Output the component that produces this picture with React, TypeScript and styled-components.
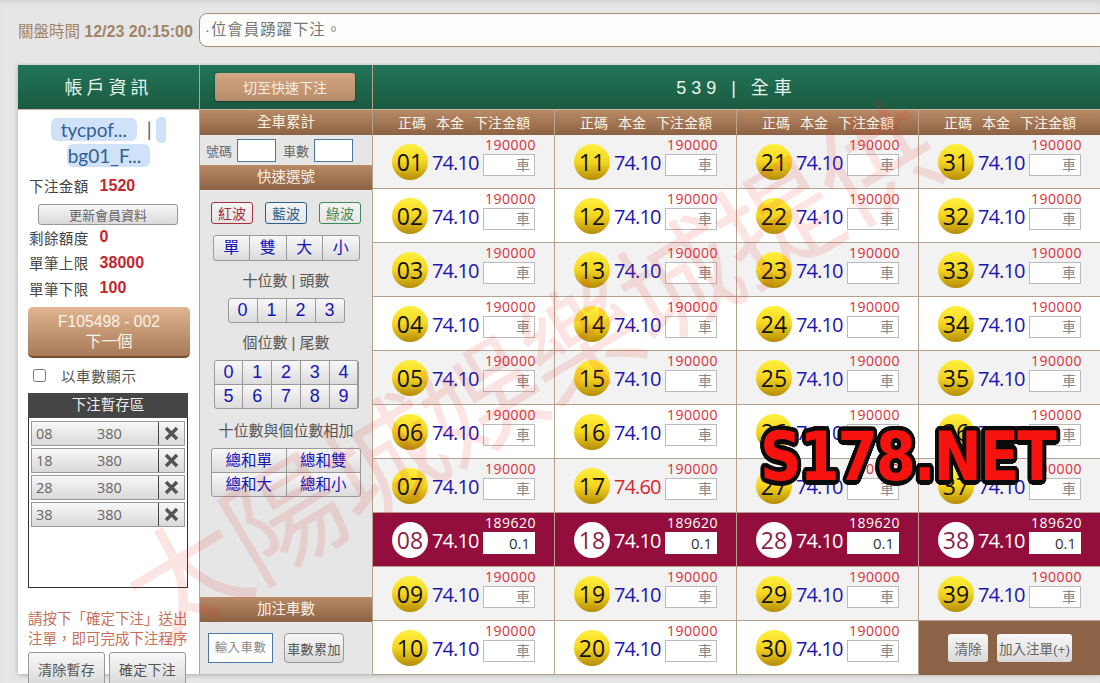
import React from "react";
import styled, { createGlobalStyle, css } from "styled-components";

const Global = createGlobalStyle`
  html, body { margin: 0; padding: 0; height: 683px; overflow: hidden; background: #e6e6e6; }
  * { box-sizing: border-box; }
  body { font-family: "Liberation Sans", "Noto Sans CJK TC", sans-serif; }
`;

const cjk = `"Liberation Sans", "Noto Sans CJK TC", sans-serif`;
const round = `"Open Sans", "Noto Sans CJK TC", sans-serif`;
const green = css`background: linear-gradient(#22745a, #1a5a40);`;
const brown = css`background: linear-gradient(#b88a66, #8d6244);`;
const silver = css`background: linear-gradient(#f8f8f8, #d9d9d9);`;

const Page = styled.div`
  position: relative;
  width: 1100px;
  height: 683px;
  overflow: hidden;
  padding: 13px 0 0 18px;
  box-shadow: inset 0 6px 6px -4px #cfcfcf;
`;
const TopBar = styled.div`
  display: flex;
  align-items: center;
  height: 34px;
  gap: 6px;
  width: 1120px;
`;
const CloseLabel = styled.div`
  font-size: 15.5px;
  color: #a08467;
  white-space: nowrap;
  b { font-size: 16px; }
`;
const Notice = styled.div`
  flex: 1;
  height: 34px;
  border: 1px solid #a98d72;
  border-radius: 8px;
  background: #fdfdfb;
  font-size: 15.4px;
  letter-spacing: 1px;
  line-height: 32px;
  padding-left: 5px;
  color: #777;
`;
const Panel = styled.div`
  display: flex;
  margin-top: 18px;
  width: 1082px;
  height: 609px;
  box-shadow: 0 1px 5px #aaa;
  background: #fff;
`;
const LeftCol = styled.div`
  width: 181px;
  flex: none;
  background: #fff;
`;
const MidCol = styled.div`
  width: 174px;
  flex: none;
  display: flex;
  flex-direction: column;
  background: #e6e6e6;
  border-left: 1px solid #b5a18d;
  border-right: 1px solid #b5a18d;
`;
const RightCol = styled.div`
  flex: 1;
  min-width: 0;
`;
const GreenHead = styled.div<{ $sp?: number }>`
  ${green}
  height: 45px;
  display: flex;
  align-items: center;
  justify-content: center;
  padding-bottom: 3px;
  color: #e9f5ea;
  font-size: 18px;
  letter-spacing: ${(p) => p.$sp ?? 4}px;
  border-bottom: 1px solid #c9b8a6;
`;
const SwitchHead = styled(GreenHead)`
  padding: 0 2px 0 0;
`;
const SwitchBtn = styled.button`
  width: 140px;
  height: 28px;
  border: 0;
  border-radius: 3px;
  background: linear-gradient(#d4a683, #b78a69);
  box-shadow: 0 1px 2px #0e3b28;
  color: #fbeee0;
  font: 14px ${cjk};
`;
const Users = styled.div`
  text-align: center;
  font: 19px/26px Lato, "Noto Sans CJK TC", sans-serif;
  color: #35608f;
  padding: 7px 8px 0;
  height: 63px;
`;
const UserTag = styled.span<{ $wrapped?: boolean }>`
  background: #cfe2f8;
  border-radius: 6px;
  padding: ${(p) => (p.$wrapped ? "0 9px 0 1px" : "0 10px")};
`;
const UserStub = styled.span`
  display: inline-block;
  vertical-align: top;
  width: 10px;
  height: 26px;
  background: #cfe2f8;
  border-radius: 5px 3px 3px 5px;
`;
const InfoRow = styled.div`
  display: flex;
  align-items: center;
  height: 25.5px;
  padding-left: 11px;
  font-size: 14.5px;
  color: #444;
  letter-spacing: 0.4px;
  b { color: #c4262e; font-size: 16px; margin-left: 11px; letter-spacing: 0; }
`;
const UpdateBtn = styled.button`
  ${silver}
  display: block;
  width: 140px;
  height: 21px;
  margin: 5px 0 0 20px;
  border: 1px solid #999;
  border-radius: 3px;
  color: #666;
  font: 13px ${cjk};
  padding: 0;
`;
const NextBtn = styled.button`
  display: block;
  width: 162px;
  height: 51px;
  margin: 6px 0 0 10px;
  border: 0;
  border-bottom: 2px solid #7a4d2a;
  border-radius: 5px;
  background: linear-gradient(#e0b592, #a87a57);
  color: #fdf3e8;
  font: 15.7px/20px ${cjk};
`;
const CheckRow = styled.label`
  display: flex;
  align-items: center;
  height: 35px;
  padding-left: 15px;
  font-size: 14.5px;
  color: #555;
  letter-spacing: 0.6px;
  input { width: 13px; height: 13px; margin: 0 15px 0 0; }
`;
const Stash = styled.div`
  width: 160px;
  height: 195px;
  margin-left: 10px;
  border: 1px solid #333;
  border-top: 0;
`;
const StashHead = styled.div`
  height: 25px;
  background: #454545;
  margin: 0 -1px 3px;
  color: #f1f1f1;
  text-align: center;
  font-size: 14.5px;
  line-height: 25px;
`;
const StashRow = styled.div`
  ${silver}
  display: flex;
  align-items: center;
  height: 25px;
  margin: 0 2px 2px;
  border: 1px solid #999;
  color: #666;
  font: 14.5px ${round};
  span { width: 65px; padding-left: 4px; }
  span + span { width: 60px; padding-left: 0; }
`;
const StashX = styled.div`
  margin-left: auto;
  width: 26px;
  height: 100%;
  border-left: 1px solid #444;
  display: flex;
  align-items: center;
  justify-content: center;
  svg { display: block; }
`;
const Hint = styled.div`
  margin: 21px 0 0 10px;
  font-size: 14.5px;
  line-height: 20px;
  color: #c4705a;
  white-space: nowrap;
`;
const StashBtns = styled.div`
  display: flex;
  gap: 4px;
  margin: 3px 0 0 10px;
`;
const StashBtn = styled.button`
  ${silver}
  width: 77px;
  height: 34px;
  flex: none;
  border: 1px solid #999;
  border-radius: 3px;
  color: #555;
  font: 14px ${cjk};
  letter-spacing: 0.3px;
  padding: 0;
`;
const SectionHead = styled.div`
  ${brown}
  height: 25px;
  flex: none;
  color: #fff2e4;
  text-align: center;
  font-size: 14.5px;
  line-height: 25px;
`;
const TotalRow = styled.div`
  display: flex;
  align-items: center;
  height: 30px;
  flex: none;
  padding-left: 6px;
  font-size: 13px;
  color: #666;
  span { margin-right: 5px; white-space: nowrap; }
`;
const SmallInput = styled.div`
  width: 39px;
  height: 23px;
  background: #fff;
  border: 1px solid #4a76a0;
  margin-right: 7px;
`;
const WaveRow = styled.div`
  display: flex;
  justify-content: space-between;
  padding: 12px 11px 11px 11px;
  flex: none;
`;
const Wave = styled.button<{ $c: string }>`
  width: 42px;
  height: 22px;
  padding: 0;
  border: 1px solid ${(p) => p.$c};
  border-radius: 3px;
  background: linear-gradient(#f4f4f4, #e6e6e6);
  color: ${(p) => p.$c};
  font: 14px ${cjk};
`;
const KeyGrid = styled.div<{ $w: number; $cols: number; $h: number; $fs: number }>`
  display: grid;
  grid-template-columns: repeat(${(p) => p.$cols}, 1fr);
  grid-auto-rows: ${(p) => p.$h}px;
  gap: 1px;
  width: ${(p) => p.$w}px;
  margin: 0 auto;
  background: #9a9a9a;
  border: 1px solid #9a9a9a;
  border-radius: 3px;
  overflow: hidden;
  flex: none;
  font-size: ${(p) => p.$fs}px;
  line-height: ${(p) => p.$h}px;
`;
const Key = styled.div`
  background: linear-gradient(#f8f8f8, #dcdcdc);
  color: #1414b8;
  text-align: center;
`;
const GroupTitle = styled.div<{ $top?: number }>`
  font-size: 15px;
  color: #555;
  text-align: center;
  line-height: 20px;
  margin: ${(p) => p.$top ?? 10}px 0 7px;
  flex: none;
`;
const AddRow = styled.div`
  margin: 11px 0;
  display: flex;
  padding-left: 8px;
  gap: 11px;
  flex: none;
`;
const AddInput = styled.div`
  width: 65px;
  height: 30px;
  border: 1px solid #4a76a0;
  background: #fff;
  color: #888;
  font-size: 12.5px;
  line-height: 28px;
  text-align: center;
  letter-spacing: 0.4px;
`;
const AddBtn = styled.button`
  ${silver}
  width: 60px;
  height: 30px;
  padding: 0;
  border: 1px solid #999;
  border-radius: 4px;
  color: #555;
  font: 13px ${cjk};
  letter-spacing: 0.4px;
`;
const Spacer = styled.div`
  flex: 1;
`;
const Columns = styled.div`
  display: grid;
  grid-template-columns: repeat(4, 182px);
`;
const ColHead = styled.div`
  ${brown}
  height: 25px;
  display: flex;
  align-items: center;
  padding: 0 0 2px 25px;
  gap: 10px;
  color: #fff2e4;
  font-size: 14px;
  border-right: 1px solid #c0a68e;
  white-space: nowrap;
`;
const Board = styled.div`
  display: grid;
  grid-template-columns: repeat(4, 182px);
  grid-template-rows: repeat(10, 54px);
  grid-auto-flow: column;
`;
const Cell = styled.div<{ $row: number }>`
  display: flex;
  align-items: center;
  padding-left: 19px;
  border-right: 1px solid #b5a18d;
  border-bottom: 1px solid #b5a18d;
  background: ${(p) => (p.$row === 7 ? "#930e3c" : p.$row % 2 ? "#fff" : "#f2f2f2")};
`;
const Ball = styled.div<{ $sel: boolean }>`
  width: 36px;
  height: 36px;
  flex: none;
  border-radius: 50%;
  margin-top: 1px;
  background: ${(p) => (p.$sel ? "#fff" : "linear-gradient(#fff03e 0%, #f5d520 50%, #b48c08 100%)")};
  color: ${(p) => (p.$sel ? "#8c1f47" : "#111")};
  font: 23px/36px ${round};
  text-align: center;
`;
const Rate = styled.div<{ $c: string }>`
  width: 55px;
  padding-left: 4px;
  flex: none;
  color: ${(p) => p.$c};
  font: 20px ${round};
  letter-spacing: -0.9px;
  white-space: nowrap;
  margin-top: 1px;
`;
const Stack = styled.div`
  width: 52px;
  align-self: flex-start;
  margin-top: 2px;
  display: flex;
  flex-direction: column;
  align-items: stretch;
`;
const Limit = styled.div<{ $sel: boolean }>`
  color: ${(p) => (p.$sel ? "#fff" : "#d8303c")};
  font: 14px/15px ${round};
  letter-spacing: 0.5px;
  text-align: right;
  height: 17px;
  margin-right: -1px;
  white-space: nowrap;
`;
const Bet = styled.div<{ $sel: boolean }>`
  height: 22px;
  border: 1px solid ${(p) => (p.$sel ? "#fff" : "#bbb")};
  background: #fff;
  color: ${(p) => (p.$sel ? "#333" : "#888")};
  font: ${(p) => (p.$sel ? 15 : 14)}px/20px ${round};
  text-align: right;
  padding-right: 4px;
`;
const ActionCell = styled.div`
  background: #8c6347;
  display: flex;
  align-items: center;
  padding-left: 29px;
  gap: 9px;
`;
const ActionBtn = styled.button<{ $w: number }>`
  ${silver}
  height: 28px;
  border: 0;
  border-radius: 3px;
  color: #666;
  padding: 0;
  font: 13.5px ${cjk};
  width: ${(p) => p.$w}px;
  white-space: nowrap;
`;
const Watermark = styled.div`
  position: absolute;
  left: 65px;
  top: 300px;
  width: 940px;
  font: 400 118px/1 "Noto Sans CJK TC", sans-serif;
  color: rgba(235, 45, 40, 0.13);
  letter-spacing: -3px;
  white-space: nowrap;
  transform: rotate(-31deg);
  pointer-events: none;
`;
const ring = Array.from({ length: 24 }, (_, i) => {
  const a = (i / 24) * Math.PI * 2;
  return `${(Math.cos(a) * 4.5).toFixed(2)}px ${(Math.sin(a) * 4.5).toFixed(2)}px 0 #0c0c0c`;
}).join(",");
const Stamp = styled.div`
  position: absolute;
  left: 760px;
  top: 421px;
  font: 700 68px/72px "DejaVu Sans", sans-serif;
  letter-spacing: -2.5px;
  color: #f5120f;
  text-shadow: ${ring};
  transform: scaleX(0.85);
  transform-origin: left center;
  white-space: nowrap;
  pointer-events: none;
`;

const Cross = () => (
  <svg width="15" height="15" viewBox="0 0 15 15">
    <path d="M2 2 L13 13 M13 2 L2 13" stroke="#555" strokeWidth="3.4" />
  </svg>
);

const stash = ["08", "18", "28", "38"];
const keysA = ["單", "雙", "大", "小"];
const keysB = ["0", "1", "2", "3"];
const keysC = ["0", "1", "2", "3", "4", "5", "6", "7", "8", "9"];
const keysD = ["總和單", "總和雙", "總和大", "總和小"];
const nums = Array.from({ length: 39 }, (_, i) => i + 1);
const pad = (n: number) => String(n).padStart(2, "0");

export default function App() {
  return (
    <Page>
      <Global />
      <TopBar>
        <CloseLabel>
          關盤時間 <b>12/23 20:15:00</b>
        </CloseLabel>
        <Notice>·位會員踴躍下注。</Notice>
      </TopBar>
      <Panel>
        <LeftCol>
          <GreenHead>帳戶資訊</GreenHead>
          <Users>
            <UserTag>tycpof...</UserTag> &nbsp;|&nbsp;
            <UserStub />
            <br />
            <UserTag $wrapped>bg01_F...</UserTag>
          </Users>
          <InfoRow>
            下注金額<b>1520</b>
          </InfoRow>
          <UpdateBtn>更新會員資料</UpdateBtn>
          <InfoRow>
            剩餘額度<b>0</b>
          </InfoRow>
          <InfoRow>
            單筆上限<b>38000</b>
          </InfoRow>
          <InfoRow>
            單筆下限<b>100</b>
          </InfoRow>
          <NextBtn>
            F105498 - 002
            <br />
            下一個
          </NextBtn>
          <CheckRow>
            <input type="checkbox" />
            以車數顯示
          </CheckRow>
          <Stash>
            <StashHead>下注暫存區</StashHead>
            {stash.map((s) => (
              <StashRow key={s}>
                <span>{s}</span>
                <span>380</span>
                <StashX>
                  <Cross />
                </StashX>
              </StashRow>
            ))}
          </Stash>
          <Hint>
            請按下「確定下注」送出
            <br />
            注單，即可完成下注程序
          </Hint>
          <StashBtns>
            <StashBtn>清除暫存</StashBtn>
            <StashBtn>確定下注</StashBtn>
          </StashBtns>
        </LeftCol>
        <MidCol>
          <SwitchHead>
            <SwitchBtn>切至快速下注</SwitchBtn>
          </SwitchHead>
          <SectionHead>全車累計</SectionHead>
          <TotalRow>
            <span>號碼</span>
            <SmallInput />
            <span>車數</span>
            <SmallInput />
          </TotalRow>
          <SectionHead>快速選號</SectionHead>
          <WaveRow>
            <Wave $c="#a5303f">紅波</Wave>
            <Wave $c="#2a5e8c">藍波</Wave>
            <Wave $c="#3c8a58">綠波</Wave>
          </WaveRow>
          <KeyGrid $w={147} $cols={4} $h={24} $fs={16}>
            {keysA.map((k) => (
              <Key key={k}>{k}</Key>
            ))}
          </KeyGrid>
          <GroupTitle>十位數 | 頭數</GroupTitle>
          <KeyGrid $w={117} $cols={4} $h={23} $fs={18}>
            {keysB.map((k) => (
              <Key key={k}>{k}</Key>
            ))}
          </KeyGrid>
          <GroupTitle>個位數 | 尾數</GroupTitle>
          <KeyGrid $w={145} $cols={5} $h={23} $fs={18}>
            {keysC.map((k) => (
              <Key key={k}>{k}</Key>
            ))}
          </KeyGrid>
          <GroupTitle $top={12}>十位數與個位數相加</GroupTitle>
          <KeyGrid $w={150} $cols={2} $h={23} $fs={15.5}>
            {keysD.map((k) => (
              <Key key={k}>{k}</Key>
            ))}
          </KeyGrid>
          <Spacer />
          <SectionHead>加注車數</SectionHead>
          <AddRow>
            <AddInput>輸入車數</AddInput>
            <AddBtn>車數累加</AddBtn>
          </AddRow>
        </MidCol>
        <RightCol>
          <GreenHead $sp={5}>539 | 全車</GreenHead>
          <Columns>
            {[0, 1, 2, 3].map((c) => (
              <ColHead key={c}>
                <span>正碼</span>
                <span>本金</span>
                <span>下注金額</span>
              </ColHead>
            ))}
          </Columns>
          <Board>
            {nums.map((n) => {
              const row = (n - 1) % 10;
              const sel = row === 7;
              const rate = n === 17 ? "74.60" : "74.10";
              const rc = sel ? "#fff" : n === 17 ? "#d8262e" : "#1a16b0";
              return (
                <Cell key={n} $row={row}>
                  <Ball $sel={sel}>{pad(n)}</Ball>
                  <Rate $c={rc}>{rate}</Rate>
                  <Stack>
                    <Limit $sel={sel}>{sel ? "189620" : "190000"}</Limit>
                    <Bet $sel={sel}>{sel ? "0.1" : "車"}</Bet>
                  </Stack>
                </Cell>
              );
            })}
            <ActionCell>
              <ActionBtn $w={40}>清除</ActionBtn>
              <ActionBtn $w={75}>加入注單(+)</ActionBtn>
            </ActionCell>
          </Board>
        </RightCol>
      </Panel>
      <Watermark>太陽城娛樂城提供</Watermark>
      <Stamp>S178.NET</Stamp>
    </Page>
  );
}
